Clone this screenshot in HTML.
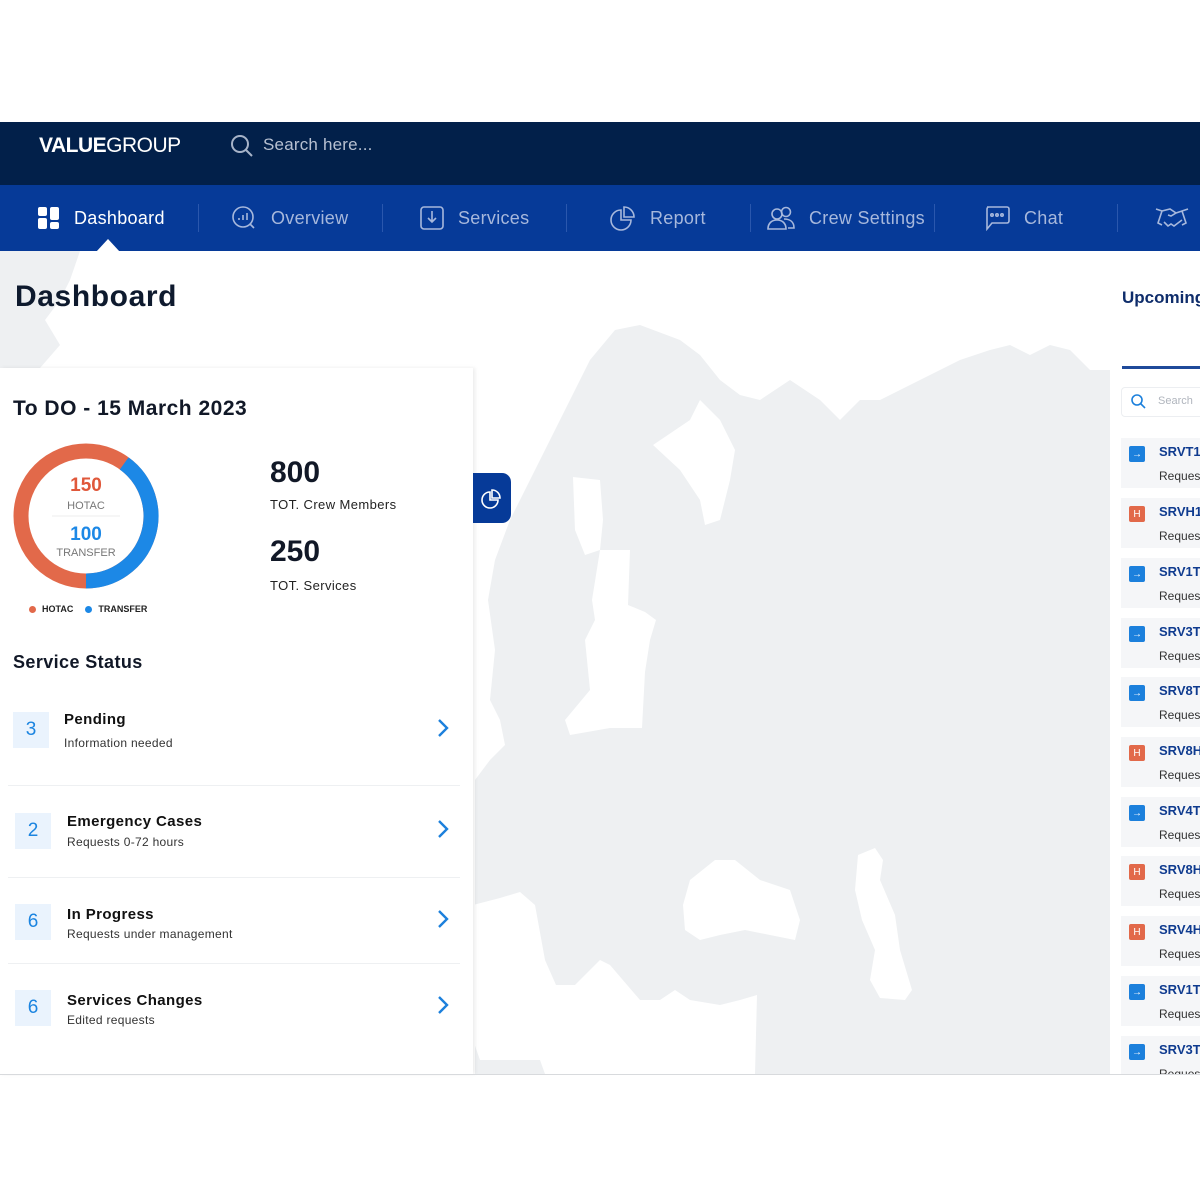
<!DOCTYPE html>
<html><head><meta charset="utf-8"><style>
*{margin:0;padding:0;box-sizing:border-box}
body{width:1200px;height:1200px;background:#fff;font-family:"Liberation Sans",sans-serif;position:relative;overflow:hidden}
.abs{position:absolute}
.top{left:0;top:122px;width:1200px;height:63px;background:#02204a}
.nav{left:0;top:185px;width:1200px;height:66px;background:#063a98}
.ni{position:absolute;top:0;height:66px;display:flex;align-items:center;color:#a7b8dc;font-size:18px;letter-spacing:0.3px}
.ni svg{margin-right:14px}
.sep{position:absolute;top:204px;width:1px;height:28px;background:#2a57ad}
.panel{left:0;top:368px;width:473px;height:706px;background:#fff;box-shadow:2px 0 4px rgba(0,0,0,.08)}
.h{font-weight:bold;color:#111827}
.num{position:absolute;width:36px;height:36px;background:#eaf3fd;color:#1b84e0;font-size:19px;display:flex;align-items:center;justify-content:center}
.rt{position:absolute;font-weight:bold;font-size:15px;color:#111;letter-spacing:0.4px}
.rs{position:absolute;font-size:12px;color:#333;letter-spacing:0.3px}
.line{position:absolute;left:8px;width:452px;height:1px;background:#eef0f2}
.item{position:absolute;left:1121px;width:79px;height:50px;background:#f5f6f8}
.ic{position:absolute;left:8px;top:8px;width:16px;height:16px;border-radius:2px;color:#fff;font-size:10px;display:flex;align-items:center;justify-content:center}
.it{position:absolute;left:38px;top:6px;font-weight:bold;font-size:13px;color:#0f3b8f;white-space:nowrap}
.is{position:absolute;left:38px;top:31px;font-size:12px;color:#333;white-space:nowrap}
</style></head><body>
<div class="abs top"></div>
<div class="abs" style="left:39px;top:134px;color:#fff;font-size:21px;letter-spacing:-0.5px"><b>VALUE</b>GROUP</div>
<svg class="abs" style="left:230px;top:134px" width="24" height="24" viewBox="0 0 24 24" fill="none" stroke="#a7b3c8" stroke-width="2"><circle cx="10" cy="10" r="8"/><path d="M16 16l6 6"/></svg>
<div class="abs" style="left:263px;top:135px;color:#b7c0d1;font-size:17px;letter-spacing:0.2px">Search here...</div>

<div class="abs nav"></div>
<div class="ni" style="left:38px;top:185px;color:#fff"><svg width="22" height="22" viewBox="0 0 22 22" fill="#fff"><rect x="0" y="0" width="9" height="9" rx="2"/><rect x="12" y="0" width="9" height="13" rx="2"/><rect x="0" y="11" width="9" height="11" rx="2"/><rect x="12" y="15" width="9" height="7" rx="2"/></svg>Dashboard</div>
<div class="ni" style="left:231px;top:185px"><svg width="26" height="26" viewBox="0 0 26 26" fill="none" stroke="#a7b8dc" stroke-width="1.6"><circle cx="12" cy="12" r="10"/><path d="M8 15v-2M12 15v-5M16 15v-7M19 19l4 4"/></svg>Overview</div>
<div class="ni" style="left:420px;top:185px"><svg width="24" height="24" viewBox="0 0 24 24" fill="none" stroke="#a7b8dc" stroke-width="1.6"><rect x="1" y="1" width="22" height="22" rx="3"/><path d="M12 5v11M8 12l4 4 4-4"/></svg>Services</div>
<div class="ni" style="left:610px;top:185px"><svg width="26" height="26" viewBox="0 0 26 26" fill="none" stroke="#a7b8dc" stroke-width="1.6"><path d="M11 5a10 10 0 1 0 10 10H11z"/><path d="M14 2a10 10 0 0 1 10 10H14z"/></svg>Report</div>
<div class="ni" style="left:767px;top:185px"><svg width="28" height="24" viewBox="0 0 28 24" fill="none" stroke="#a7b8dc" stroke-width="1.6"><circle cx="10" cy="8" r="5"/><circle cx="19" cy="6" r="4.5"/><path d="M1 23c0-6 4-9 9-9s9 3 9 9zM17 13c6 0 10 3 10 9h-6"/></svg>Crew Settings</div>
<div class="ni" style="left:984px;top:185px"><svg width="26" height="26" viewBox="0 0 26 26" fill="none" stroke="#a7b8dc" stroke-width="1.6"><path d="M3 2h20a2 2 0 0 1 2 2v12a2 2 0 0 1-2 2H8l-5 6V4a2 2 0 0 1 2-2z"/><circle cx="8" cy="10" r="1.2"/><circle cx="13" cy="10" r="1.2"/><circle cx="18" cy="10" r="1.2"/></svg>Chat</div>
<div class="ni" style="left:1155px;top:185px"><svg width="34" height="26" viewBox="0 0 34 26" fill="none" stroke="#a7b8dc" stroke-width="1.6"><path d="M1 4l6 2-4 12 4 2M33 4l-6 2 4 12-4 2M7 6l8-2 6 4-5 3-3-1M27 6l-6 2M9 17l4 4 3-2 3 2 4-3 4-3"/></svg></div>
<div class="sep" style="left:198px"></div><div class="sep" style="left:382px"></div><div class="sep" style="left:566px"></div><div class="sep" style="left:750px"></div><div class="sep" style="left:934px"></div><div class="sep" style="left:1117px"></div>
<div class="abs" style="left:96px;top:239px;width:0;height:0;border-left:12px solid transparent;border-right:12px solid transparent;border-bottom:13px solid #fff"></div>

<svg class="abs" style="left:0;top:251px" width="1200" height="823" viewBox="0 251 1200 823">
<path fill="#eef0f2" d="M0 251H80L70 280 60 300 45 320 60 345 40 368H0z"/>
<path fill="#eef0f2" d="M475 1074V780L490 760 505 745 500 720 490 700 495 650 488 600 495 560 510 520 530 480 560 420 590 360 615 330 640 325 680 340 700 355 720 380 740 395 760 400 790 380 820 400 840 420 860 400 880 400 900 390 920 380 940 370 960 360 990 350 1010 345 1030 355 1050 345 1070 350 1090 370 1110 370V1074z"/>
<g fill="#fff">
<path d="M653 445 680 470 700 500 705 525 720 520 730 480 735 450 720 420 700 400 690 420z"/>
<path d="M600 550 630 550 628 605 645 612 656 620 650 640 645 672 642 728 610 728 570 735 565 720 590 690 585 640 595 620 592 600z"/>
<path d="M573 477 600 480 603 520 600 550 585 555 575 530z"/>
<path d="M683 905 690 880 715 860 735 860 760 880 790 890 800 920 795 940 770 935 745 930 720 935 700 940 685 930z"/>
<path d="M858 855 875 848 883 860 880 880 895 915 900 950 912 990 905 1000 880 998 870 980 875 950 862 920 855 890z"/>
<path d="M473 905 500 898 520 892 535 905 545 960 556 985 575 985 600 960 610 965 640 1000 660 1000 675 990 690 1000 720 1005 740 1000 757 995 755 1074 545 1074 540 1060 480 1060 473 1040z"/>
</g>
</svg>

<div class="abs h" style="left:15px;top:280px;font-size:30px;color:#0e1a2e;letter-spacing:0.6px">Dashboard</div>

<div class="abs panel">
 <div class="abs h" style="left:13px;top:29px;font-size:21px;letter-spacing:0.5px">To DO - 15 March 2023</div>
 <svg class="abs" style="left:12px;top:74px" width="148" height="148" viewBox="0 0 148 148">
  <circle cx="74" cy="74" r="65" fill="none" stroke="#e2694a" stroke-width="15"/>
  <path d="M112.2 21.4A65 65 0 0 1 74 139" fill="none" stroke="#1c88e6" stroke-width="15"/>
  <line x1="40" y1="74" x2="108" y2="74" stroke="#eee"/>
 </svg>
 <div class="abs" style="left:0;top:107px;width:172px;text-align:center;color:#e0583b;font-weight:bold;font-size:19px">150</div>
 <div class="abs" style="left:0;top:132px;width:172px;text-align:center;color:#777;font-size:11px">HOTAC</div>
 <div class="abs" style="left:0;top:156px;width:172px;text-align:center;color:#1c88e6;font-weight:bold;font-size:19px">100</div>
 <div class="abs" style="left:0;top:179px;width:172px;text-align:center;color:#777;font-size:11px">TRANSFER</div>
 <div class="abs" style="left:29px;top:236px;font-size:9px;color:#222;font-weight:bold;display:flex;align-items:center"><span style="width:7px;height:7px;border-radius:50%;background:#e2694a;margin-right:6px"></span>HOTAC<span style="width:7px;height:7px;border-radius:50%;background:#1c88e6;margin:0 6px 0 12px"></span>TRANSFER</div>
 <div class="abs h" style="left:270px;top:88px;font-size:30px">800</div>
 <div class="abs" style="left:270px;top:129px;font-size:13px;color:#222;letter-spacing:0.4px">TOT. Crew Members</div>
 <div class="abs h" style="left:270px;top:167px;font-size:30px">250</div>
 <div class="abs" style="left:270px;top:210px;font-size:13px;color:#222;letter-spacing:0.4px">TOT. Services</div>
 <div class="abs h" style="left:13px;top:284px;font-size:18px;letter-spacing:0.4px">Service Status</div>
</div>
<div class="num" style="left:13px;top:712px">3</div><div class="rt" style="left:64px;top:711px">Pending</div><div class="rs" style="left:64px;top:736px">Information needed</div>
<div class="line" style="top:785px"></div>
<div class="num" style="left:15px;top:813px">2</div><div class="rt" style="left:67px;top:813px">Emergency Cases</div><div class="rs" style="left:67px;top:835px">Requests 0-72 hours</div>
<div class="line" style="top:877px"></div>
<div class="num" style="left:15px;top:904px">6</div><div class="rt" style="left:67px;top:906px">In Progress</div><div class="rs" style="left:67px;top:927px">Requests under management</div>
<div class="line" style="top:963px"></div>
<div class="num" style="left:15px;top:990px">6</div><div class="rt" style="left:67px;top:992px">Services Changes</div><div class="rs" style="left:67px;top:1013px">Edited requests</div>
<svg class="abs" style="left:436px;top:718px" width="16" height="300" viewBox="0 0 16 300" fill="none" stroke="#1c80dc" stroke-width="2.4"><path d="M3 2l8 8-8 8M3 103l8 8-8 8M3 193l8 8-8 8M3 279l8 8-8 8"/></svg>

<div class="abs" style="left:473px;top:473px;width:38px;height:50px;background:#063a98;border-radius:0 9px 9px 0"></div>
<svg class="abs" style="left:481px;top:488px" width="22" height="22" viewBox="0 0 22 22" fill="none" stroke="#fff" stroke-width="1.6"><path d="M9 4a8 8 0 1 0 8 8H9z"/><path d="M11 2a8 8 0 0 1 8 8h-8z"/></svg>

<div class="abs" style="left:1110px;top:368px;width:90px;height:706px;background:#fff"></div>
<div class="abs h" style="left:1122px;top:288px;font-size:17px;color:#0f2d6b;white-space:nowrap">Upcoming</div>
<div class="abs" style="left:1122px;top:366px;width:78px;height:3px;background:#1f4a9a"></div>
<div class="abs" style="left:1121px;top:387px;width:90px;height:30px;border:1px solid #eceef1;border-radius:4px"></div>
<svg class="abs" style="left:1131px;top:394px" width="15" height="15" viewBox="0 0 15 15" fill="none" stroke="#1c80dc" stroke-width="1.6"><circle cx="6" cy="6" r="5"/><path d="M10 10l4 4"/></svg>
<div class="abs" style="left:1158px;top:395px;font-size:11px;color:#b0b5bd">Search</div>

<div class="item" style="top:438px"><div class="ic" style="background:#1c80dc">→</div><div class="it">SRVT1</div><div class="is">Request</div></div>
<div class="item" style="top:498px"><div class="ic" style="background:#e2694a">H</div><div class="it">SRVH1</div><div class="is">Request</div></div>
<div class="item" style="top:558px"><div class="ic" style="background:#1c80dc">→</div><div class="it">SRV1T1</div><div class="is">Request</div></div>
<div class="item" style="top:618px"><div class="ic" style="background:#1c80dc">→</div><div class="it">SRV3T</div><div class="is">Request</div></div>
<div class="item" style="top:677px"><div class="ic" style="background:#1c80dc">→</div><div class="it">SRV8T</div><div class="is">Request</div></div>
<div class="item" style="top:737px"><div class="ic" style="background:#e2694a">H</div><div class="it">SRV8H</div><div class="is">Request</div></div>
<div class="item" style="top:797px"><div class="ic" style="background:#1c80dc">→</div><div class="it">SRV4T</div><div class="is">Request</div></div>
<div class="item" style="top:856px"><div class="ic" style="background:#e2694a">H</div><div class="it">SRV8H</div><div class="is">Request</div></div>
<div class="item" style="top:916px"><div class="ic" style="background:#e2694a">H</div><div class="it">SRV4H</div><div class="is">Request</div></div>
<div class="item" style="top:976px"><div class="ic" style="background:#1c80dc">→</div><div class="it">SRV1T1</div><div class="is">Request</div></div>
<div class="item" style="top:1036px;height:38px;overflow:hidden"><div class="ic" style="background:#1c80dc">→</div><div class="it">SRV3T</div><div class="is">Request</div></div>

<div class="abs" style="left:0;top:1074px;width:1200px;height:1px;background:#d8dadd"></div>
</body></html>
